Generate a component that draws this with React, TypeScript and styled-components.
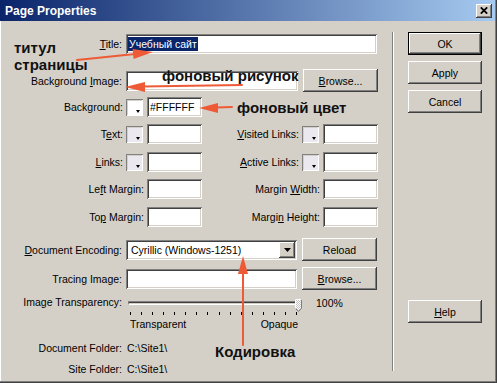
import styled, { createGlobalStyle } from "styled-components";

const face = "#d4d0c8";
const shadow = "#808080";
const dark = "#404040";
const accent = "#ee5a36";

function ColorPick({ value, fill }: { value?: string; fill: string }) {
  return (
    <PickGroup>
      <Swatch $fill={fill}>
        <SwatchArrow />
      </Swatch>
      <Field $w={55}>{value}</Field>
    </PickGroup>
  );
}

export default function App() {
  return (
    <>
      <GlobalStyle />
      <Window>
        <TitleBar>
          <Caption>Page Properties</Caption>
          <CloseButton aria-label="Close">
            <svg width="8" height="7" viewBox="0 0 8 7">
              <path d="M0.8 0.3 L7.2 6.7 M7.2 0.3 L0.8 6.7" stroke="#000" strokeWidth="1.7" />
            </svg>
          </CloseButton>
        </TitleBar>

        <Body>
          <Form>
            <FieldRow $mt={0}>
              <Label>
                <U>T</U>itle:
              </Label>
              <Field $w={251}>
                <Selected>Учебный сайт</Selected>
              </Field>
            </FieldRow>

            <FieldRow $mt={15}>
              <Label>
                Background <U>I</U>mage:
              </Label>
              <Field $w={172} />
              <Button $w={75}>
                <U>B</U>rowse...
              </Button>
            </FieldRow>

            <PairRow $mt={8}>
              <Cell $w={202}>
                <Label>Background:</Label>
                <ColorPick value="#FFFFFF" fill="#ffffff" />
              </Cell>
            </PairRow>

            <PairRow $mt={7}>
              <Cell $w={202}>
                <Label>
                  T<U>e</U>xt:
                </Label>
                <ColorPick fill="#ebe8ef" />
              </Cell>
              <Cell $w={176}>
                <Label>
                  <U>V</U>isited Links:
                </Label>
                <ColorPick fill="#ebe8ef" />
              </Cell>
            </PairRow>

            <PairRow $mt={8}>
              <Cell $w={202}>
                <Label>
                  <U>L</U>inks:
                </Label>
                <ColorPick fill="#ebe8ef" />
              </Cell>
              <Cell $w={176}>
                <Label>
                  <U>A</U>ctive Links:
                </Label>
                <ColorPick fill="#ebe8ef" />
              </Cell>
            </PairRow>

            <PairRow $mt={7}>
              <Cell $w={202}>
                <Label>
                  Le<U>f</U>t Margin:
                </Label>
                <Field $w={55} />
              </Cell>
              <Cell $w={176}>
                <Label>
                  Margin <U>W</U>idth:
                </Label>
                <Field $w={55} />
              </Cell>
            </PairRow>

            <PairRow $mt={8}>
              <Cell $w={202}>
                <Label>
                  To<U>p</U> Margin:
                </Label>
                <Field $w={55} />
              </Cell>
              <Cell $w={176}>
                <Label>
                  Margi<U>n</U> Height:
                </Label>
                <Field $w={55} />
              </Cell>
            </PairRow>

            <FieldRow $mt={11}>
              <Label>
                <U>D</U>ocument Encoding:
              </Label>
              <Select $w={171}>
                <SelectText>Cyrillic (Windows-1251)</SelectText>
                <DropButton>
                  <svg width="7" height="4" viewBox="0 0 7 4">
                    <path d="M0 0h7L3.5 4z" fill="#000" />
                  </svg>
                </DropButton>
              </Select>
              <Button $w={75}>Reload</Button>
            </FieldRow>

            <FieldRow $mt={9}>
              <Label>Tracing Image:</Label>
              <Field $w={171} />
              <Button $w={75}>
                <U>B</U>rowse...
              </Button>
            </FieldRow>

            <SliderRow>
              <Label>Image Transparency:</Label>
              <Slider>
                <Track />
                <Thumb>
                  <svg width="7" height="13" viewBox="0 0 7 13">
                    <defs>
                      <pattern id="hatch" width="2" height="2" patternUnits="userSpaceOnUse">
                        <rect width="2" height="2" fill="#ffffff" />
                        <rect width="1" height="1" fill="#c0c0c0" />
                        <rect x="1" y="1" width="1" height="1" fill="#c0c0c0" />
                      </pattern>
                    </defs>
                    <path d="M0.5 0.5H6.5V9.5L3.5 12.5L0.5 9.5Z" fill="url(#hatch)" stroke="#808080" />
                    <path d="M0.5 9.5V0.5H6.5" fill="none" stroke="#ffffff" />
                  </svg>
                </Thumb>
                <Ticks>
                  {Array.from({ length: 16 }).map((_, i) => (
                    <Tick key={i} />
                  ))}
                </Ticks>
                <Scale>
                  <span>Transparent</span>
                  <span>Opaque</span>
                </Scale>
              </Slider>
              <Percent>100%</Percent>
            </SliderRow>

            <FolderRow $mt={10}>
              <Label>Document Folder:</Label>
              <span>C:\Site1\</span>
            </FolderRow>
            <FolderRow $mt={7}>
              <Label>Site Folder:</Label>
              <span>C:\Site1\</span>
            </FolderRow>
          </Form>

          <Separator />

          <Actions>
            <Button $w={74} $default>
              OK
            </Button>
            <Button $w={74}>Apply</Button>
            <Button $w={74}>Cancel</Button>
            <HelpButton $w={74}>
              <U>H</U>elp
            </HelpButton>
          </Actions>
        </Body>

        <Notes>
          <Note $x={14} $y={39}>
            титул
            <br />
            страницы
          </Note>
          <Note $x={162} $y={67}>фоновый рисунок</Note>
          <Note $x={237} $y={99}>фоновый цвет</Note>
          <Note $x={215} $y={343}>Кодировка</Note>
          <Arrows width="497" height="383" viewBox="0 0 497 383">
            <g stroke={accent} strokeWidth="2" strokeLinecap="round">
              <line x1="77" y1="60" x2="135" y2="54" />
              <line x1="242" y1="85" x2="143" y2="86.6" />
              <line x1="232" y1="107" x2="216" y2="107.5" />
              <line x1="243" y1="345" x2="243" y2="272" />
            </g>
            <g fill={accent}>
              <polygon points="153,52 132.6,49 133.6,59.1" />
              <polygon points="125,87 145,82 145,92" />
              <polygon points="199,108 218,103 218,113" />
              <polygon points="243,256 238,274 248,274" />
            </g>
          </Arrows>
        </Notes>
      </Window>
    </>
  );
}

const GlobalStyle = createGlobalStyle`
  html, body {
    margin: 0;
    padding: 0;
    background: ${face};
  }
  body {
    font-family: "Liberation Sans", Arial, sans-serif;
    font-size: 10.5px;
    color: #000;
  }
`;

const Window = styled.div`
  position: relative;
  width: 497px;
  height: 383px;
  box-sizing: border-box;
  padding: 0 2px 2px 0;
  background: ${face};
  box-shadow: inset -1px -1px ${dark}, inset -2px -2px ${shadow}, inset 1px 0 #ffffff;
  display: flex;
  flex-direction: column;
  overflow: hidden;
`;

const TitleBar = styled.div`
  height: 21px;
  flex: none;
  display: flex;
  align-items: center;
  justify-content: space-between;
  padding: 0 3px 0 5px;
  background: linear-gradient(to right, #0a246a, #a6caf0);
`;

const Caption = styled.div`
  color: #ffffff;
  font-weight: bold;
  font-size: 12px;
`;

const CloseButton = styled.button`
  width: 16px;
  height: 14px;
  padding: 0;
  border: none;
  background: ${face};
  display: flex;
  align-items: center;
  justify-content: center;
  box-shadow: inset -1px -1px ${dark}, inset 1px 1px #ffffff, inset -2px -2px ${shadow};
`;

const Body = styled.div`
  flex: 1;
  display: flex;
`;

const Form = styled.div`
  width: 392px;
  padding-top: 13px;
  display: flex;
  flex-direction: column;
`;

const U = styled.span`
  text-decoration: underline;
`;

const Label = styled.span`
  text-align: right;
  white-space: nowrap;
`;

const FieldRow = styled.div<{ $mt: number }>`
  margin-top: ${(p) => p.$mt}px;
  height: 20px;
  display: grid;
  grid-template-columns: 122px auto auto;
  justify-content: start;
  align-items: center;
  column-gap: 4px;

  & > button {
    margin-left: 1px;
  }
`;

const PairRow = styled.div<{ $mt: number }>`
  margin-top: ${(p) => p.$mt}px;
  height: 20px;
  display: flex;
`;

const Cell = styled.div<{ $w: number }>`
  width: ${(p) => p.$w}px;
  display: flex;
  justify-content: flex-end;
  align-items: center;
  gap: 3px;
`;

const PickGroup = styled.div`
  display: flex;
  align-items: center;
  gap: 4px;
`;

const Swatch = styled.div<{ $fill: string }>`
  position: relative;
  width: 17px;
  height: 17px;
  box-sizing: border-box;
  background: ${(p) => p.$fill};
  box-shadow: inset 1px 1px ${shadow}, inset -1px -1px #ffffff, inset 2px 2px ${face};
`;

const SwatchArrow = styled.span`
  position: absolute;
  right: 3px;
  bottom: 3px;
  width: 0;
  height: 0;
  border-left: 2.5px solid transparent;
  border-right: 2.5px solid transparent;
  border-top: 3px solid #000;
`;

const Field = styled.div<{ $w: number }>`
  width: ${(p) => p.$w}px;
  height: 20px;
  box-sizing: border-box;
  padding: 0 3px;
  background: #ffffff;
  display: flex;
  align-items: center;
  white-space: nowrap;
  box-shadow: inset 1px 1px ${shadow}, inset -1px -1px #ffffff, inset 2px 2px ${dark}, inset -2px -2px ${face};
`;

const Selected = styled.span`
  margin-left: -1px;
  padding: 1px 1px;
  background: #0a246a;
  color: #ffffff;
`;

const Select = styled(Field)`
  padding: 0 2px 0 5px;
  justify-content: space-between;
`;

const SelectText = styled.span``;

const DropButton = styled.span`
  width: 16px;
  height: 16px;
  box-sizing: border-box;
  background: ${face};
  display: flex;
  align-items: center;
  justify-content: center;
  box-shadow: inset -1px -1px ${dark}, inset 1px 1px #ffffff, inset -2px -2px ${shadow};
`;

const Button = styled.button<{ $w: number; $default?: boolean }>`
  width: ${(p) => p.$w}px;
  height: 23px;
  padding: 0;
  border: ${(p) => (p.$default ? "1px solid #000" : "none")};
  box-sizing: border-box;
  background: ${face};
  font-family: "Liberation Sans", Arial, sans-serif;
  font-size: 10.5px;
  color: #000;
  box-shadow: inset -1px -1px ${dark}, inset 1px 1px #ffffff, inset -2px -2px ${shadow};
`;

const HelpButton = styled(Button)`
  margin-top: 181px;
`;

const SliderRow = styled.div`
  margin-top: 8px;
  height: 36px;
  display: flex;
  align-items: flex-start;

  & > ${Label} {
    width: 122px;
    line-height: 14px;
  }
`;

const Slider = styled.div`
  position: relative;
  width: 175px;
  margin-left: 4px;
  padding: 0 2px;
  box-sizing: border-box;
`;

const Track = styled.div`
  margin-top: 6px;
  height: 4px;
  box-sizing: border-box;
  border-top: 1px solid ${shadow};
  border-left: 1px solid ${shadow};
  border-bottom: 1px solid #ffffff;
  border-right: 1px solid #ffffff;
  box-shadow: inset 0 1px ${dark};
`;

const Thumb = styled.div`
  position: absolute;
  left: 169px;
  top: 4px;
  width: 7px;
  height: 13px;
  line-height: 0;
`;

const Ticks = styled.div`
  margin-top: 7px;
  padding: 0 2px;
  display: flex;
  justify-content: space-between;
`;

const Tick = styled.span`
  width: 1px;
  height: 3px;
  background: #000;
`;

const Scale = styled.div`
  margin-top: 3px;
  padding: 0 1px 0 2px;
  display: flex;
  justify-content: space-between;
  line-height: 12px;
`;

const Percent = styled.span`
  margin-left: 15px;
  margin-top: 1px;
  line-height: 14px;
`;

const FolderRow = styled.div<{ $mt: number }>`
  margin-top: ${(p) => p.$mt}px;
  height: 14px;
  line-height: 14px;
  display: grid;
  grid-template-columns: 122px auto;
  justify-content: start;
  column-gap: 5px;
`;

const Separator = styled.div`
  width: 1px;
  height: 339px;
  margin-top: 11px;
  background: ${shadow};
  border-right: 1px solid #ffffff;
`;

const Actions = styled.div`
  padding: 11px 0 0 14px;
  display: flex;
  flex-direction: column;
  gap: 6px;
`;

const Notes = styled.div`
  position: absolute;
  inset: 0;
  pointer-events: none;
`;

const Note = styled.div<{ $x: number; $y: number }>`
  position: absolute;
  left: ${(p) => p.$x}px;
  top: ${(p) => p.$y}px;
  font: bold 15px/17px "Liberation Sans", Arial, sans-serif;
  color: #111111;
  white-space: nowrap;
`;

const Arrows = styled.svg`
  position: absolute;
  left: 0;
  top: 0;
`;
